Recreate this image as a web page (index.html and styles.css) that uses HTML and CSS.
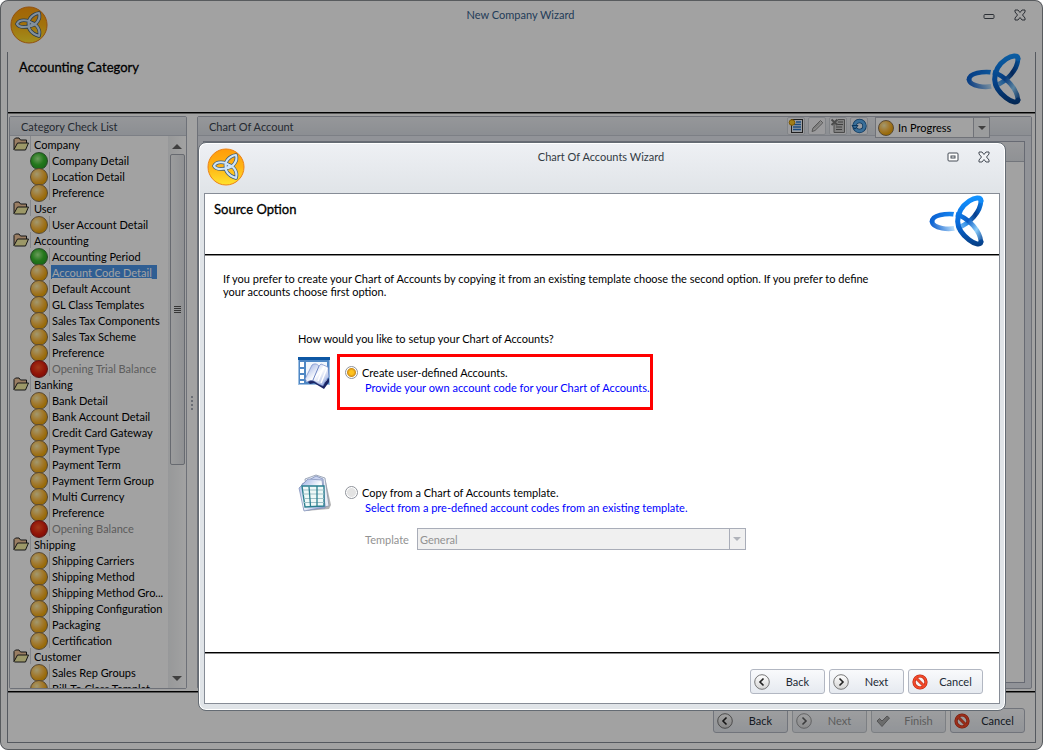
FILE: index.html
```html
<!DOCTYPE html>
<html lang="en">
<head>
<meta charset="utf-8">
<title>New Company Wizard</title>
<link rel="stylesheet" href="styles.css">
</head>
<body>
<svg class="defs" aria-hidden="true">
  <defs>
    <linearGradient id="lg-top" gradientUnits="userSpaceOnUse" x1="46" y1="70" x2="200" y2="160">
      <stop offset="0" stop-color="#0a5ccc"/><stop offset=".35" stop-color="#1689f5"/><stop offset=".6" stop-color="#0a5cc4"/><stop offset=".8" stop-color="#8ccdfa"/><stop offset="1" stop-color="#0a4796"/>
    </linearGradient>
    <linearGradient id="lg-bot" gradientUnits="userSpaceOnUse" x1="46" y1="110" x2="200" y2="40">
      <stop offset="0" stop-color="#0a5ccc"/><stop offset=".35" stop-color="#b5dbfa"/><stop offset=".6" stop-color="#2f8fe8"/><stop offset=".8" stop-color="#073e8c"/><stop offset="1" stop-color="#0a7be8"/>
    </linearGradient>
    <linearGradient id="lg-arc" gradientUnits="userSpaceOnUse" x1="0" y1="20" x2="0" y2="170">
      <stop offset="0" stop-color="#1292ff"/><stop offset=".55" stop-color="#0768d8"/><stop offset="1" stop-color="#063c80"/>
    </linearGradient>
    <linearGradient id="gold" x1="0" y1="0" x2="0" y2="1">
      <stop offset="0" stop-color="#ff9d0a"/><stop offset=".5" stop-color="#ffb414"/><stop offset="1" stop-color="#ffe32e"/>
    </linearGradient>
    <linearGradient id="page" x1="0" y1="0" x2="1" y2="1">
      <stop offset="0" stop-color="#8fa6e0"/><stop offset=".5" stop-color="#fff"/><stop offset="1" stop-color="#7f97d8"/>
    </linearGradient>
    <linearGradient id="disc" x1="0" y1="0" x2="0" y2="1">
      <stop offset="0" stop-color="#fff"/><stop offset="1" stop-color="#d4d4d4"/>
    </linearGradient>
  </defs>
  <symbol id="brand" viewBox="40 15 168 156">
    <g fill="none" stroke-linecap="round">
      <path d="M49 95C52 116 100 121 130 112C162 100 195 66 196 32" stroke="url(#lg-bot)" stroke-width="14"/>
      <path d="M49 95C50 74 90 70 120 73C162 84 194 126 196 156" stroke="url(#lg-top)" stroke-width="14"/>
      <path d="M120 60Q111 90 120 120" stroke="var(--gap)" stroke-width="7"/>
      <path d="M196 32C194 8 127 38 126 94C127 136 192 178 196 156" stroke="url(#lg-arc)" stroke-width="15"/>
    </g>
  </symbol>
  <symbol id="app" viewBox="0 0 38 38">
    <circle cx="19" cy="19" r="18.5" fill="#fff3d6"/>
    <circle cx="19" cy="19" r="18" fill="url(#gold)" stroke="#e8801c"/>
    <g fill="none" stroke-linejoin="round">
      <path d="M7 18C9 13 18 13 23 18C18 22 9 22 7 18ZM29 7C22 8 17 14 19 20C26 20 31 13 29 7ZM29 30C22 28 17 23 19 16C26 17 31 23 29 30Z" stroke="#3b5b78" stroke-width="3.600"/>
      <path d="M7 18C9 13 18 13 23 18C18 22 9 22 7 18ZM29 7C22 8 17 14 19 20C26 20 31 13 29 7ZM29 30C22 28 17 23 19 16C26 17 31 23 29 30Z" stroke="#cfe4f7" stroke-width="2.200"/>
    </g>
  </symbol>
  <symbol id="folder" viewBox="0 0 16 14">
    <path d="M1 12.500V2.500L2.500 1H6L7.500 3H13.500V6" fill="#f3c79c" stroke="#222"/>
    <path d="M1 12.500L4.500 6H15.500L12.500 13H1.500Z" fill="#f6efa4" stroke="#222"/>
  </symbol>
  <symbol id="close" viewBox="0 0 12 12">
    <path d="M1 1H4L6 3.500L8 1H11V3L8.500 6L11 9V11H8L6 8.500L4 11H1V9L3.500 6L1 3Z" fill="#fff" fill-opacity=".35" stroke="#444b54"/>
  </symbol>
  <symbol id="prev" viewBox="0 0 16 16">
    <circle cx="8" cy="8" r="7.300" fill="url(#disc)" stroke="#777"/><path d="M9.500 4.500L6 8L9.500 11.500" fill="none" stroke="#222" stroke-width="1.600"/>
  </symbol>
  <symbol id="next" viewBox="0 0 16 16">
    <circle cx="8" cy="8" r="7.300" fill="url(#disc)" stroke="#777"/><path d="M6.500 4.500L10 8L6.500 11.500" fill="none" stroke="#222" stroke-width="1.600"/>
  </symbol>
  <symbol id="stop" viewBox="0 0 16 16">
    <circle cx="8" cy="8" r="6" fill="#f6f2f2" stroke="#b5250f" stroke-width="3.200"/><path d="M4 4L12 12" stroke="#b5250f" stroke-width="2.800"/>
    <circle cx="8" cy="8" r="6" fill="none" stroke="#f2492a" stroke-width="2"/><path d="M4 4L12 12" stroke="#f2492a" stroke-width="1.800"/>
  </symbol>
  <symbol id="tick" viewBox="0 0 16 16">
    <path d="M2 8L4.500 5.500L7 8L12 3L14.500 5L7 13.500Z" fill="#8d8d8d" stroke="#555"/>
  </symbol>
</svg>

<div class="window">
  <header class="titlebar">
    <svg class="app-icon"><use href="#app"/></svg>
    <h1 class="title title-link">New Company Wizard</h1>
    <button class="win-btn" aria-label="Minimize"><svg width="12" height="12" viewBox="0 0 12 12"><rect x="1" y="5.500" width="10" height="4" rx="1" fill="#fff" fill-opacity=".3" stroke="#444b54"/></svg></button>
    <button class="win-btn" aria-label="Close"><svg width="12" height="12"><use href="#close"/></svg></button>
  </header>
  <div class="frame">
    <div class="banner">
      <h2>Accounting Category</h2>
      <svg class="brand"><use href="#brand"/></svg>
    </div>
    <main class="panels">
      <section class="panel checklist">
        <h3 class="panel-head">Category Check List</h3>
        <div class="tree-area">
          <ul class="tree">
            <li class="group"><svg><use href="#folder"/></svg><span>Company</span></li>
            <li class="leaf done"><span>Company Detail</span></li>
            <li class="leaf"><span>Location Detail</span></li>
            <li class="leaf"><span>Preference</span></li>
            <li class="group"><svg><use href="#folder"/></svg><span>User</span></li>
            <li class="leaf"><span>User Account Detail</span></li>
            <li class="group"><svg><use href="#folder"/></svg><span>Accounting</span></li>
            <li class="leaf done"><span>Accounting Period</span></li>
            <li class="leaf"><a class="selected" href="#account-code">Account Code Detail</a></li>
            <li class="leaf"><span>Default Account</span></li>
            <li class="leaf"><span>GL Class Templates</span></li>
            <li class="leaf"><span>Sales Tax Components</span></li>
            <li class="leaf"><span>Sales Tax Scheme</span></li>
            <li class="leaf"><span>Preference</span></li>
            <li class="leaf blocked"><span>Opening Trial Balance</span></li>
            <li class="group"><svg><use href="#folder"/></svg><span>Banking</span></li>
            <li class="leaf"><span>Bank Detail</span></li>
            <li class="leaf"><span>Bank Account Detail</span></li>
            <li class="leaf"><span>Credit Card Gateway</span></li>
            <li class="leaf"><span>Payment Type</span></li>
            <li class="leaf"><span>Payment Term</span></li>
            <li class="leaf"><span>Payment Term Group</span></li>
            <li class="leaf"><span>Multi Currency</span></li>
            <li class="leaf"><span>Preference</span></li>
            <li class="leaf blocked"><span>Opening Balance</span></li>
            <li class="group"><svg><use href="#folder"/></svg><span>Shipping</span></li>
            <li class="leaf"><span>Shipping Carriers</span></li>
            <li class="leaf"><span>Shipping Method</span></li>
            <li class="leaf"><span>Shipping Method Gro...</span></li>
            <li class="leaf"><span>Shipping Configuration</span></li>
            <li class="leaf"><span>Packaging</span></li>
            <li class="leaf"><span>Certification</span></li>
            <li class="group"><svg><use href="#folder"/></svg><span>Customer</span></li>
            <li class="leaf"><span>Sales Rep Groups</span></li>
            <li class="leaf"><span>Bill-To Class Templat...</span></li>
          </ul>
          <div class="scrollbar">
            <svg width="10" height="5" viewBox="0 0 10 5"><path d="M0 5L5 0L10 5Z" fill="#666"/></svg>
            <div class="thumb"><i></i></div>
            <svg class="down" width="10" height="5" viewBox="0 0 10 5"><path d="M0 0L5 5L10 0Z" fill="#666"/></svg>
          </div>
        </div>
      </section>
      <div class="splitter"><i></i><i></i><i></i><i></i></div>
      <section class="panel chart">
        <div class="panel-head toolbar">
          <h3>Chart Of Account</h3>
          <button class="tool" aria-label="New"><svg viewBox="0 0 16 16"><rect x="3.500" y="1.500" width="11" height="13" fill="#eef6ff" stroke="#333"/><path d="M8 4H13M6 6.500H13M5 9H13M5 11.500H13" stroke="#2c78c8" stroke-width="1.300"/><circle cx="4" cy="4.500" r="2.800" fill="#ffc926" stroke="#c58a00"/></svg></button>
          <button class="tool" aria-label="Edit"><svg viewBox="0 0 16 16"><path d="M3 13.500L4 10L11.500 2.500L13.800 4.800L6 12.500Z" fill="#ddd" stroke="#888"/><path d="M5 10.500L11 4.500" stroke="#aaa"/></svg></button>
          <button class="tool" aria-label="Delete"><svg viewBox="0 0 16 16"><path d="M4 5V14.500H14.500V1.500H8" fill="#ccc" stroke="#777"/><path d="M8 4H13M7 6.500H13M6 9H12M6 11.500H12" stroke="#666"/><path d="M1.500 1.500L7.500 7M7.500 1.500L1.500 7" stroke="#777" stroke-width="2"/></svg></button>
          <button class="tool" aria-label="Refresh"><svg viewBox="0 0 16 16"><circle cx="8.500" cy="8" r="5" fill="#eef6ff" stroke="#145592" stroke-width="4.400"/><circle cx="8.500" cy="8" r="5" fill="none" stroke="#5aaef0" stroke-width="2.800"/><path d="M1 7.500H7L4 11Z" fill="#5aaef0" stroke="#145592"/></svg></button>
          <label class="status">
            <i class="ball"></i>
            <select aria-label="Status"><option>In Progress</option></select>
            <b></b>
          </label>
        </div>
        <div class="grid"><div class="grid-head"></div></div>
      </section>
    </main>
    <footer class="actions outer-actions">
      <button><svg><use href="#prev"/></svg><span>Back</span></button>
      <button disabled><svg><use href="#next"/></svg><span>Next</span></button>
      <button disabled><svg><use href="#tick"/></svg><span>Finish</span></button>
      <button><svg><use href="#stop"/></svg><span>Cancel</span></button>
    </footer>
  </div>
</div>
<div class="shade"></div>

<div class="dialog" role="dialog" aria-label="Chart Of Accounts Wizard">
  <header class="titlebar">
    <svg class="app-icon"><use href="#app"/></svg>
    <h1 class="title">Chart Of Accounts Wizard</h1>
    <button class="win-btn" aria-label="Maximize"><svg width="12" height="12" viewBox="0 0 12 12"><rect x="1" y="2" width="10" height="8" rx="1" fill="#fff" stroke="#444b54"/><rect x="4" y="5" width="4" height="2" fill="none" stroke="#444b54"/></svg></button>
    <button class="win-btn" aria-label="Close"><svg width="12" height="12"><use href="#close"/></svg></button>
  </header>
  <div class="frame">
    <div class="banner">
      <h2>Source Option</h2>
      <svg class="brand"><use href="#brand"/></svg>
    </div>
    <div class="content">
      <p class="intro">If you prefer to create your Chart of Accounts by copying it from an existing template choose the second option. If you prefer to define your accounts choose first option.</p>
      <div class="choices">
        <p class="question">How would you like to setup your Chart of Accounts?</p>
        <div class="choice">
          <svg class="pic" viewBox="0 0 33 38">
            <rect x="0.500" y="3.500" width="31" height="27" fill="#4f87c4" stroke="#9fc0e2"/>
            <rect x="0" y="3" width="32" height="3" fill="#0d57a4"/>
            <path d="M2 8H6V13H2ZM2 15H6V19H2ZM2 21H6V25H2ZM2 27H6V29H2Z" fill="#fff"/>
            <path d="M8 8H29V28H8Z" fill="#f1f6fc"/>
            <path d="M7 25L12 30L16 29L26 35L31 28V24L24 31L14 25Z" fill="#1b2564"/>
            <path d="M7 25L14 11C17 9 19 10 21 12L23 10L30 13L31 23C29 24 27 28 25 32C22 31 19 29 16 27C13 26 11 27 9 28Z" fill="url(#page)" stroke="#6079bd" stroke-width=".6"/>
            <path d="M21 12L15 26" fill="none" stroke="#6d85c4"/>
            <path d="M26 12L20 27M29 14L23 29" fill="none" stroke="#fff" stroke-width="1.500"/>
          </svg>
          <div class="box highlighted">
            <label class="option"><input type="radio" name="source" checked>Create user-defined Accounts.</label>
            <p class="hint">Provide your own account code for your Chart of Accounts.</p>
          </div>
        </div>
        <div class="choice">
          <svg class="pic" viewBox="0 0 33 38">
            <path d="M8 37L31 35L33 31L28 8Z" fill="#808080" opacity=".6"/>
            <path d="M7 5L18 1L27 4L31 32L10 36Z" fill="#e9edf6" stroke="#8c97ab" stroke-width=".8"/>
            <path d="M4 10L18 2L25 5L27 34L6 36Z" fill="#c8d2ef" stroke="#7e8eb8" stroke-width=".8"/>
            <path d="M1 14L10 5L24 6L27 33L6 37Z" fill="url(#page)" stroke="#8795bd" stroke-width=".8"/>
            <path d="M4 12L26 12V32L7 33Z" fill="#eef8f7" stroke="#2a7f90" stroke-width="1.400"/>
            <path d="M5 16H26M5 20H26M6 24.500H26M6 28.500H26" fill="none" stroke="#9cbfc6"/>
            <path d="M11 12.500L12.500 32M19 12V32" fill="none" stroke="#2a7f90" stroke-width="1.300"/>
          </svg>
          <div class="box">
            <label class="option"><input type="radio" name="source">Copy from a Chart of Accounts template.</label>
            <p class="hint">Select from a pre-defined account codes from an existing template.</p>
            <div class="template">
              <label for="template">Template</label>
              <div class="combo">
                <select id="template" disabled><option>General</option></select>
                <b></b>
              </div>
            </div>
          </div>
        </div>
      </div>
    </div>
    <footer class="actions">
      <button><svg><use href="#prev"/></svg><span>Back</span></button>
      <button><svg><use href="#next"/></svg><span>Next</span></button>
      <button><svg><use href="#stop"/></svg><span>Cancel</span></button>
    </footer>
  </div>
</div>
</body>
</html>
```

FILE: styles.css
```css
* { box-sizing: border-box; margin: 0; padding: 0; }

body {
  height: 100vh;
  position: relative;
  overflow: hidden;
  background: #fff;
  color: #000;
  font: 11px/13px Lato, "Open Sans", sans-serif;
}
h1, h2, h3 { font-size: 11px; font-weight: 400; }
ul { list-style: none; }
button, select, input { font: inherit; color: inherit; }
button { border: 0; background: none; }
.defs { position: absolute; width: 0; height: 0; }

/* Windows */
.window, .dialog {
  --gap: #fff;
  display: flex;
  flex-direction: column;
  border: 1px solid #9a9fa5;
  border-radius: 8px;
}
.window { height: 100vh; padding: 0 6px 6px; background: #fff; }
.shade {
  position: absolute;
  inset: 0;
  border: 1px solid rgba(0, 0, 0, .1);
  border-radius: 8px;
  background: rgba(0, 0, 0, .365);
}
.dialog {
  position: absolute;
  inset: 142px 37px 39px 198px;
  border-color: #646b73;
  padding: 0 5px 6px;
  background: linear-gradient(#eef0f4, #e0e4e8 50px);
  box-shadow: inset 0 0 0 1px #fff;
}
.titlebar {
  display: flex;
  align-items: flex-start;
  gap: 19px;
  height: 51px;
  flex: none;
  padding: 5px 10px 0 3px;
}
.dialog .titlebar { height: 50px; }
.app-icon { width: 38px; height: 38px; flex: none; }
.title { flex: 1; padding: 2px 0 0 10px; text-align: center; color: #333b44; }
.title-link { color: #37618c; }
.win-btn { width: 12px; height: 12px; margin-top: 3px; }
.win-btn svg { display: block; }

.frame {
  display: flex;
  flex: 1;
  flex-direction: column;
  min-height: 0;
  border: 1px solid #868c96;
  background: #fff;
}
.window > .frame { border-top: 0; }
.banner {
  display: flex;
  flex: none;
  justify-content: space-between;
  height: 61px;
  padding: 1px 13px 0 11px;
}
.dialog .banner { padding-right: 14px; padding-left: 9px; }
.banner, .panels, .content { border-bottom: 1px solid #000; box-shadow: 0 1px #8a8a8a; }
.banner h2 { padding-top: 5px; font-size: 13px; line-height: 18px; -webkit-text-stroke: 0.300px; }
.brand { width: 56px; height: 52px; }

/* Main window panels */
.panels { display: flex; flex: 1; min-height: 0; padding: 3px 3px 2px 1px; }
.panel { display: flex; flex-direction: column; border: 1px solid #adb2be; border-radius: 2px; background: #e5e8ef; }
.checklist { width: 178px; flex: none; }
.chart { flex: 1; }
.panel-head {
  height: 19px;
  flex: none;
  padding: 3px 11px 0;
  background: linear-gradient(#eceef2, #dce0e7);
  border-bottom: 1px solid #c3c8d1;
  color: #3a434e;
}
.tree-area { display: flex; flex: 1; min-height: 0; background: #fff; }
.tree { flex: 1; overflow: hidden; }
.tree li { display: flex; height: 16px; line-height: 17px; white-space: nowrap; }
.tree .group { padding-left: 3px; }
.tree .group svg { width: 16px; height: 14px; margin: 1px 1px 0 0; flex: none; }
.group span { padding-left: 3px; }
.leaf span { padding-left: 2px; }
.group span, .leaf span { border-left: 1px solid #d4d7dc; }
.leaf { padding-left: 20px; }
.leaf::before, .ball {
  content: "";
  width: 16px;
  height: 16px;
  flex: none;
  border: 1px solid #8a7250;
  border-radius: 50%;
  background: radial-gradient(circle at 36% 32%, #fff0b0, #ffc04a 40%, #f0a60c 70%, #ffd800);
}
.leaf span { margin-left: 1px; }
.leaf.done::before { border-color: #3c733c; background: radial-gradient(circle at 42% 36%, #a8f590, #38bc2c 45%, #1a9620); }
.leaf.blocked::before { border-color: #942020; background: radial-gradient(circle at 45% 40%, #ff5a28, #e6210e 50%, #b30e0e); }
.leaf.blocked span { color: #929292; }
.leaf .selected { height: 14px; margin: 1px 0 0 3px; padding: 0 5px 0 1px; line-height: 15px; background: #4a94e8; color: #fff; }
.scrollbar {
  display: flex;
  width: 18px;
  flex: none;
  flex-direction: column;
  align-items: center;
  padding: 8px 0 7px;
  background: linear-gradient(90deg, #eef0f2, #fff);
}
.thumb {
  display: flex;
  width: 15px;
  height: 58%;
  margin-top: 5px;
  align-items: center;
  justify-content: center;
  border: 1px solid #a3a8b0;
  border-radius: 2px;
  background: linear-gradient(90deg, #f5f6f7, #e2e4e8);
}
.thumb i { width: 7px; height: 7px; background: repeating-linear-gradient(#555 0 1px, transparent 1px 2px); }
.down { margin-top: auto; }
.splitter { display: flex; width: 10px; flex-direction: column; align-items: center; justify-content: center; gap: 2px; }
.splitter i { width: 2px; height: 2px; background: #a8adb8; }

.toolbar { display: flex; gap: 3px; padding: 0 41px 0 11px; }
.toolbar h3 { flex: 1; padding-top: 3px; }
.tool { width: 18px; height: 18px; border: 1px solid #ccd0d7; border-radius: 2px; background: #f4f5f7; }
.tool svg { display: block; width: 16px; height: 16px; }
.status, .combo { display: flex; align-items: center; border: 1px solid #b0b4be; background: #fff; }
.status { width: 115px; height: 21px; margin-left: 4px; padding-left: 2px; flex: none; }
select { flex: 1; min-width: 0; border: 0; outline: 0; appearance: none; background: none; }
.status select { padding-left: 4px; color: #000; }
.status b, .combo b { display: flex; width: 16px; align-self: stretch; align-items: center; justify-content: center; border-left: 1px solid #b0b4be; background: #f4f6f8; }
.status b::after, .combo b::after { content: ""; border: 4px solid transparent; border-top-color: #666; border-bottom: 0; }
.grid { flex: 1; margin: 5px 6px 5px 5px; border: 1px solid #a3a8b6; background: #fff; }
.grid-head { height: 20px; border-bottom: 1px solid #b4b8c2; background: linear-gradient(#f0f1f4, #e2e5ea); }

/* Dialog content */
.content { flex: 1; padding: 17px 18px; }
.intro { max-width: 650px; }
.choices { display: grid; gap: 9px; margin: 34px 0 0 75px; justify-content: start; }
.choice { display: grid; grid-template-columns: 33px auto; column-gap: 6px; align-items: start; justify-content: start; }
.choice + .choice { margin-top: 55px; }
.pic { width: 33px; height: 38px; }
.box { border: 3px solid transparent; padding: 8px 0 12px 5px; }
.box.highlighted { border-color: #f00; }
.option { display: flex; gap: 4px; align-items: center; height: 15px; }
.option input {
  width: 13px;
  height: 13px;
  appearance: none;
  border: 1px solid #8e9299;
  border-radius: 50%;
  background: radial-gradient(circle, #e3e3e3 4px, #fff 5px);
}
.option input:checked { background: radial-gradient(circle, #ffc31e 2px, #d08f1a 4px, #fff 5px); }
.hint { padding-left: 20px; line-height: 15px; color: #00f; }
.template { display: flex; gap: 8px; align-items: center; margin: 13px 0 0 20px; color: #929292; }
.combo { width: 329px; height: 22px; border-color: #a9adb8; background: #f0f0f0; }
.combo select { padding-left: 2px; opacity: 1; color: #929292; }
.combo b { border-color: #a9adb8; background: #f0f0f0; }
.combo b::after { border-top-color: #b0b3ba; }

/* Button rows */
.actions { display: flex; flex: none; justify-content: flex-end; gap: 4px; height: 50px; padding: 16px 16px 0; }
.outer-actions { padding-right: 10px; }
.actions button {
  display: flex;
  width: 75px;
  height: 25px;
  align-items: center;
  padding: 0 4px 0 3px;
  border: 1px solid #b2b7c2;
  border-radius: 3px;
  background: linear-gradient(#f9fafc, #e6eaf0);
  color: #222a35;
}
.actions svg { width: 16px; height: 16px; flex: none; }
.actions span { flex: 1; text-align: center; padding-left: 5px; }
.actions button:disabled { border-color: #c4c8cf; color: #929292; }
.actions button:disabled svg { opacity: .7; }
```
